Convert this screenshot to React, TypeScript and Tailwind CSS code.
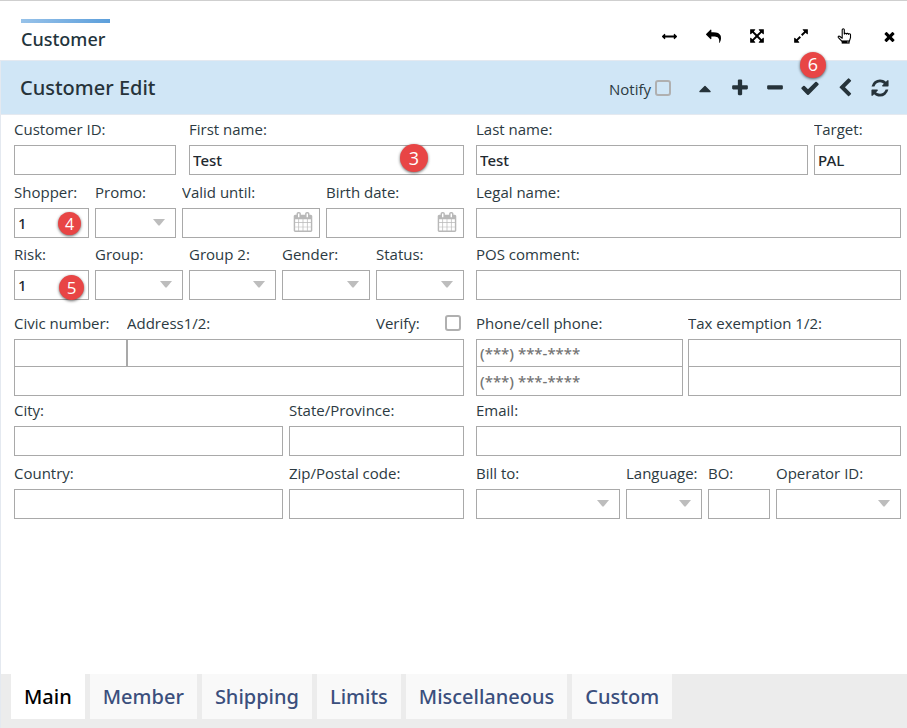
import { useId, type ReactNode } from "react";

const icons = {
  arrowsH:
    "M1792 896q0 26-19 45l-256 256q-19 19-45 19t-45-19-19-45v-128h-1024v128q0 26-19 45t-45 19-45-19l-256-256q-19-19-19-45t19-45l256-256q19-19 45-19t45 19 19 45v128h1024v-128q0-26 19-45t45-19 45 19l256 256q19 19 19 45z",
  reply:
    "M1792 1120q0 166-127 451-3 7-10.5 24t-13.5 30-13 22q-12 17-28 17-15 0-23.5-10t-8.5-25q0-9 2.5-26.5t2.5-23.5q5-68 5-123 0-101-17.5-181t-48.5-138.5-80-101-105.5-69.5-133-42.5-154-21.5-175.5-6h-224v256q0 26-19 45t-45 19-45-19l-512-512q-19-19-19-45t19-45l512-512q19-19 45-19t45 19 19 45v256h224q713 0 875 403 53 134 53 333z",
  arrowsAlt:
    "M1411 541l-355 355 355 355 144-144q29-31 70-14 39 17 39 59v448q0 26-19 45t-45 19h-448q-42 0-59-40-17-39 14-69l144-144-355-355-355 355 144 144q31 30 14 69-17 40-59 40h-448q-26 0-45-19t-19-45v-448q0-42 40-59 39-17 69 14l144 144 355-355-355-355-144 144q-19 19-45 19-12 0-24-5-40-17-40-59v-448q0-26 19-45t45-19h448q42 0 59 40 17 39-14 69l-144 144 355 355 355-355-144-144q-31-30-14-69 17-40 59-40h448q26 0 45 19t19 45v448q0 42-39 59-13 5-25 5-26 0-45-19z",
  expand:
    "M883 1056q0 13-10 23l-332 332 144 144q19 19 19 45t-19 45-45 19h-448q-26 0-45-19t-19-45v-448q0-26 19-45t45-19 45 19l144 144 332-332q10-10 23-10t23 10l114 114q10 10 10 23zm781-864v448q0 26-19 45t-45 19-45-19l-144-144-332 332q-10 10-23 10t-23-10l-114-114q-10-10-10-23t10-23l332-332-144-144q-19-19-19-45t19-45 45-19h448q26 0 45 19t19 45z",
  times:
    "M1490 1322q0 40-28 68l-136 136q-28 28-68 28t-68-28l-294-294-294 294q-28 28-68 28t-68-28l-136-136q-28-28-28-68t28-68l294-294-294-294q-28-28-28-68t28-68l136-136q28-28 68-28t68 28l294 294 294-294q28-28 68-28t68 28l136 136q28 28 28 68t-28 68l-294 294 294 294q28 28 28 68z",
  caretUp:
    "M1408 1216q0 26-19 45t-45 19h-896q-26 0-45-19t-19-45 19-45l448-448q19-19 45-19t45 19l448 448q19 19 19 45z",
  plus: "M1600 736v192q0 40-28 68t-68 28h-416v416q0 40-28 68t-68 28h-192q-40 0-68-28t-28-68v-416h-416q-40 0-68-28t-28-68v-192q0-40 28-68t68-28h416v-416q0-40 28-68t68-28h192q40 0 68 28t28 68v416h416q40 0 68 28t28 68z",
  minus:
    "M1600 736v192q0 40-28 68t-68 28h-1216q-40 0-68-28t-28-68v-192q0-40 28-68t68-28h1216q40 0 68 28t28 68z",
  check:
    "M1671 566q0 40-28 68l-724 724-136 136q-28 28-68 28t-68-28l-136-136-362-362q-28-28-28-68t28-68l136-136q28-28 68-28t68 28l294 295 656-657q28-28 68-28t68 28l136 136q28 28 28 68z",
  chevronLeft:
    "M1427 301l-531 531 531 531q19 19 19 45t-19 45l-166 166q-19 19-45 19t-45-19l-742-742q-19-19-19-45t19-45l742-742q19-19 45-19t45 19l166 166q19 19 19 45t-19 45z",
  refresh:
    "M1639 1056q0 5-1 7-64 268-268 434.5t-478 166.5q-146 0-282.5-55t-243.5-157l-129 129q-19 19-45 19t-45-19-19-45v-448q0-26 19-45t45-19h448q26 0 45 19t19 45-19 45l-137 137q71 66 161 102t187 36q134 0 250-65t186-179q11-17 53-117 8-23 30-23h192q13 0 22.5 9.5t9.5 22.5zm25-800v448q0 26-19 45t-45 19h-448q-26 0-45-19t-19-45 19-45l138-138q-148-137-349-137-134 0-250 65t-186 179q-11 17-53 117-8 23-30 23h-199q-13 0-22.5-9.5t-9.5-22.5v-7q65-268 270-434.5t480-166.5q146 0 284 55.5t245 156.5l130-129q19-19 45-19t45 19 19 45z",
  calendar:
    "M192 1664h288v-288h-288v288zm352 0h320v-288h-320v288zm-352-352h288v-320h-288v320zm352 0h320v-320h-320v320zm-352-384h288v-288h-288v288zm736 736h320v-288h-320v288zm-384-736h320v-288h-320v288zm768 736h288v-288h-288v288zm-384-352h320v-320h-320v320zm-352-864v-288q0-13-9.5-22.5t-22.5-9.5h-64q-13 0-22.5 9.5t-9.5 22.5v288q0 13 9.5 22.5t22.5 9.5h64q13 0 22.5-9.5t9.5-22.5zm736 864h288v-320h-288v320zm-384-384h320v-288h-320v288zm384 0h288v-288h-288v288zm32-480v-288q0-13-9.5-22.5t-22.5-9.5h-64q-13 0-22.5 9.5t-9.5 22.5v288q0 13 9.5 22.5t22.5 9.5h64q13 0 22.5-9.5t9.5-22.5zm384-64v1280q0 52-38 90t-90 38h-1408q-52 0-90-38t-38-90v-1280q0-52 38-90t90-38h128v-96q0-66 47-113t113-47h64q66 0 113 47t47 113v96h384v-96q0-66 47-113t113-47h64q66 0 113 47t47 113v96h128q52 0 90 38t38 90z",
};

function Icon({ name, className }: { name: keyof typeof icons; className: string }) {
  return (
    <svg viewBox="0 0 1792 1792" fill="currentColor" className={className} aria-hidden="true">
      <path d={icons[name]} />
    </svg>
  );
}

function PointingHand() {
  return (
    <svg viewBox="0 0 16 16" className="size-4" aria-hidden="true">
      <path
        d="M5.2 10.2 2.6 8.3c-.9-.7-1.9.5-1.2 1.3l3.4 3.6h7.6l1.1-3.5V6.6c0-1.1-1.7-1.2-1.9-.2-.1-1.3-1.8-1.4-2.1-.3-.2-1.2-2-1.2-2.2 0V1.9c0-1.5-2.1-1.5-2.1 0z"
        fill="none"
        stroke="currentColor"
        strokeWidth="1.1"
        strokeLinejoin="round"
      />
      <path d="M4.7 12.6h7.9v3H4.7z" fill="currentColor" />
      <path d="M10.4 13.6h1v1h-1z" fill="#fff" />
    </svg>
  );
}

function IconButton({ label, children }: { label: string; children: ReactNode }) {
  return (
    <button type="button" aria-label={label} className="flex size-5 items-center justify-center">
      {children}
    </button>
  );
}

function Badge({ className, children }: { className: string; children: ReactNode }) {
  return (
    <span
      className={`absolute flex items-center justify-center rounded-full bg-[#e84545] text-white shadow-[0_1px_3px_rgba(0,0,0,0.6)] ${className}`}
    >
      {children}
    </span>
  );
}

const box =
  "block w-full min-w-0 rounded-none border border-[#a9a9a9] bg-white px-[3px] font-['Noto_Sans','Open_Sans',sans-serif] text-[15px] font-medium text-[#1f2a30] outline-none placeholder:text-[#757575] placeholder:opacity-100";
const labelText = "block h-[30px] truncate text-[15px] leading-7 text-[#2c3a42]";

type FieldProps = {
  label: string;
  kind?: "text" | "select" | "date";
  value?: string;
  badge?: ReactNode;
};

function Field({ label, kind = "text", value = "", badge }: FieldProps) {
  const id = useId();
  return (
    <div className="min-w-0">
      <label htmlFor={id} className={labelText}>
        {label}
      </label>
      <div className="relative">
        {kind === "select" ? (
          <select id={id} className={`${box} h-[30px] appearance-none`}>
            <option value=""></option>
          </select>
        ) : (
          <input id={id} type="text" defaultValue={value} className={`${box} h-[30px]`} />
        )}
        {kind === "select" && (
          <svg
            viewBox="0 0 12 7"
            className="pointer-events-none absolute top-[11px] right-[11px] h-[7px] w-3 text-[#bdbdbd]"
            aria-hidden="true"
          >
            <path d="M0 0h12L6.6 6.6h-1.2z" fill="currentColor" />
          </svg>
        )}
        {kind === "date" && (
          <button type="button" aria-label={`${label} calendar`} className="absolute top-1 right-[7px] text-[#b8b8b8]">
            <Icon name="calendar" className="size-5" />
          </button>
        )}
        {badge}
      </div>
    </div>
  );
}

function FieldPair({ label, placeholder }: { label: string; placeholder?: string }) {
  const id = useId();
  return (
    <div className="min-w-0">
      <label htmlFor={id} className={labelText}>
        {label}
      </label>
      <input id={id} type="text" placeholder={placeholder} className={`${box} h-7`} />
      <input type="text" aria-label={`${label} line 2`} placeholder={placeholder} className={`${box} -mt-px h-[30px]`} />
    </div>
  );
}

function Row({ className = "", children }: { className?: string; children: ReactNode }) {
  return <div className={`grid grid-cols-[450fr_425fr] gap-3 ${className}`}>{children}</div>;
}

const checkbox = "size-4 appearance-none rounded-[3px] border-2 border-[#b0b0b0]";
const tabs = ["Main", "Member", "Shipping", "Limits", "Miscellaneous", "Custom"];

export default function App() {
  return (
    <div className="flex min-h-screen flex-col border-t border-t-[#cfcfcf] bg-white font-['Open_Sans','Noto_Sans',sans-serif]">
      <header className="flex h-[59px] items-center justify-between pr-2 pl-[21px]">
        <div className="flex h-full flex-col pt-[18px]">
          <div className="h-1 bg-linear-to-r from-[#97c2e9] to-[#5c9fdb]" />
          <h1 className="w-[89px] font-['Noto_Sans','Open_Sans',sans-serif] text-[18px] leading-8 font-medium text-[#23343c]">
            Customer
          </h1>
        </div>
        <div className="flex gap-6 pt-[11px] text-black">
          <IconButton label="Resize horizontally">
            <Icon name="arrowsH" className="size-[15px]" />
          </IconButton>
          <IconButton label="Undo">
            <Icon name="reply" className="size-[15px]" />
          </IconButton>
          <IconButton label="Fit">
            <Icon name="arrowsAlt" className="size-4" />
          </IconButton>
          <IconButton label="Expand">
            <Icon name="expand" className="size-4" />
          </IconButton>
          <IconButton label="Select">
            <PointingHand />
          </IconButton>
          <IconButton label="Close">
            <Icon name="times" className="size-[15px]" />
          </IconButton>
        </div>
      </header>

      <main className="flex grow flex-col border-l border-[#e4e9f0]">
        <div className="flex h-[55px] items-center justify-between border-y border-[#e4e9f0] bg-[#d0e6f6] pr-[17px] pl-[19px] text-[#26333a]">
          <h2 className="font-['Noto_Sans','Open_Sans',sans-serif] text-[20px] font-medium">Customer Edit</h2>
          <div className="flex items-center">
            <label htmlFor="notify" className="pt-1 text-[15px] text-[#2c3a42]">
              Notify
            </label>
            <input id="notify" type="checkbox" className={`${checkbox} ml-1 mr-6`} />
            <div className="flex gap-[15px]">
              <IconButton label="Collapse">
                <Icon name="caretUp" className="size-5" />
              </IconButton>
              <IconButton label="Add">
                <Icon name="plus" className="size-5" />
              </IconButton>
              <IconButton label="Remove">
                <Icon name="minus" className="size-5" />
              </IconButton>
              <div className="relative">
                <IconButton label="Save">
                  <Icon name="check" className="size-5" />
                </IconButton>
                <Badge className="-top-[26px] -right-[6px] size-[26px] text-[18px]">6</Badge>
              </div>
              <IconButton label="Back">
                <Icon name="chevronLeft" className="size-5" />
              </IconButton>
              <IconButton label="Refresh">
                <Icon name="refresh" className="size-5" />
              </IconButton>
            </div>
          </div>
        </div>

        <form className="grow pr-[6px] pb-6 pl-[13px]">
          <Row>
            <div className="grid min-w-0 grid-cols-[162fr_275fr] gap-[13px]">
              <Field label="Customer ID:" />
              <Field
                label="First name:"
                value="Test"
                badge={<Badge className="-top-px right-9 size-7 text-[18px]">3</Badge>}
              />
            </div>
            <div className="grid min-w-0 grid-cols-[332fr_87fr] gap-[6px]">
              <Field label="Last name:" value="Test" />
              <Field label="Target:" value="PAL" />
            </div>
          </Row>

          <Row className="mt-[3px]">
            <div className="grid min-w-0 grid-cols-[75fr_81fr_138fr_138fr] gap-[6px]">
              <Field
                label="Shopper:"
                value="1"
                badge={<Badge className="top-1 right-2 size-[23px] text-[16px]">4</Badge>}
              />
              <Field label="Promo:" kind="select" />
              <Field label="Valid until:" kind="date" />
              <Field label="Birth date:" kind="date" />
            </div>
            <Field label="Legal name:" />
          </Row>

          <Row className="mt-[2px]">
            <div className="grid min-w-0 grid-cols-[75fr_88fr_87fr_88fr_88fr] gap-[6px]">
              <Field
                label="Risk:"
                value="1"
                badge={<Badge className="top-[5px] right-[5px] size-[25px] text-[17px]">5</Badge>}
              />
              <Field label="Group:" kind="select" />
              <Field label="Group 2:" kind="select" />
              <Field label="Gender:" kind="select" />
              <Field label="Status:" kind="select" />
            </div>
            <Field label="POS comment:" />
          </Row>

          <Row className="mt-[9px]">
            <div className="min-w-0">
              <div className="grid grid-cols-[113fr_249fr_88fr]">
                <label htmlFor="civic" className={labelText}>
                  Civic number:
                </label>
                <label htmlFor="address" className={labelText}>
                  Address1/2:
                </label>
                <div className="flex justify-between pr-[3px]">
                  <label htmlFor="verify" className={labelText}>
                    Verify:
                  </label>
                  <input id="verify" type="checkbox" className={`${checkbox} mt-[6px]`} />
                </div>
              </div>
              <div className="grid grid-cols-[113fr_337fr]">
                <input id="civic" type="text" className={`${box} h-7`} />
                <input id="address" type="text" className={`${box} h-7`} />
              </div>
              <input type="text" aria-label="Address line 2" className={`${box} -mt-px h-[30px]`} />
            </div>
            <div className="grid min-w-0 grid-cols-[207fr_213fr] gap-[5px]">
              <FieldPair label="Phone/cell phone:" placeholder="(***) ***-****" />
              <FieldPair label="Tax exemption 1/2:" />
            </div>
          </Row>

          <Row>
            <div className="grid min-w-0 grid-cols-[269fr_175fr] gap-[6px]">
              <Field label="City:" />
              <Field label="State/Province:" />
            </div>
            <Field label="Email:" />
          </Row>

          <Row className="mt-[3px]">
            <div className="grid min-w-0 grid-cols-[269fr_175fr] gap-[6px]">
              <Field label="Country:" />
              <Field label="Zip/Postal code:" />
            </div>
            <div className="grid min-w-0 grid-cols-[144fr_76fr_62fr_125fr] gap-[6px]">
              <Field label="Bill to:" kind="select" />
              <Field label="Language:" kind="select" />
              <Field label="BO:" />
              <Field label="Operator ID:" kind="select" />
            </div>
          </Row>
        </form>

        <nav className="flex gap-[5px] bg-[#ececec] pb-[9px] pl-[10px]">
          {tabs.map((tab, i) => (
            <button
              key={tab}
              type="button"
              className={`h-[45px] px-[13px] font-['Noto_Sans','Open_Sans',sans-serif] text-[20px] font-medium ${
                i === 0 ? "bg-white text-black" : "bg-[#f9f9f9] text-[#3b4f7d]"
              }`}
            >
              {tab}
            </button>
          ))}
        </nav>
      </main>
    </div>
  );
}
